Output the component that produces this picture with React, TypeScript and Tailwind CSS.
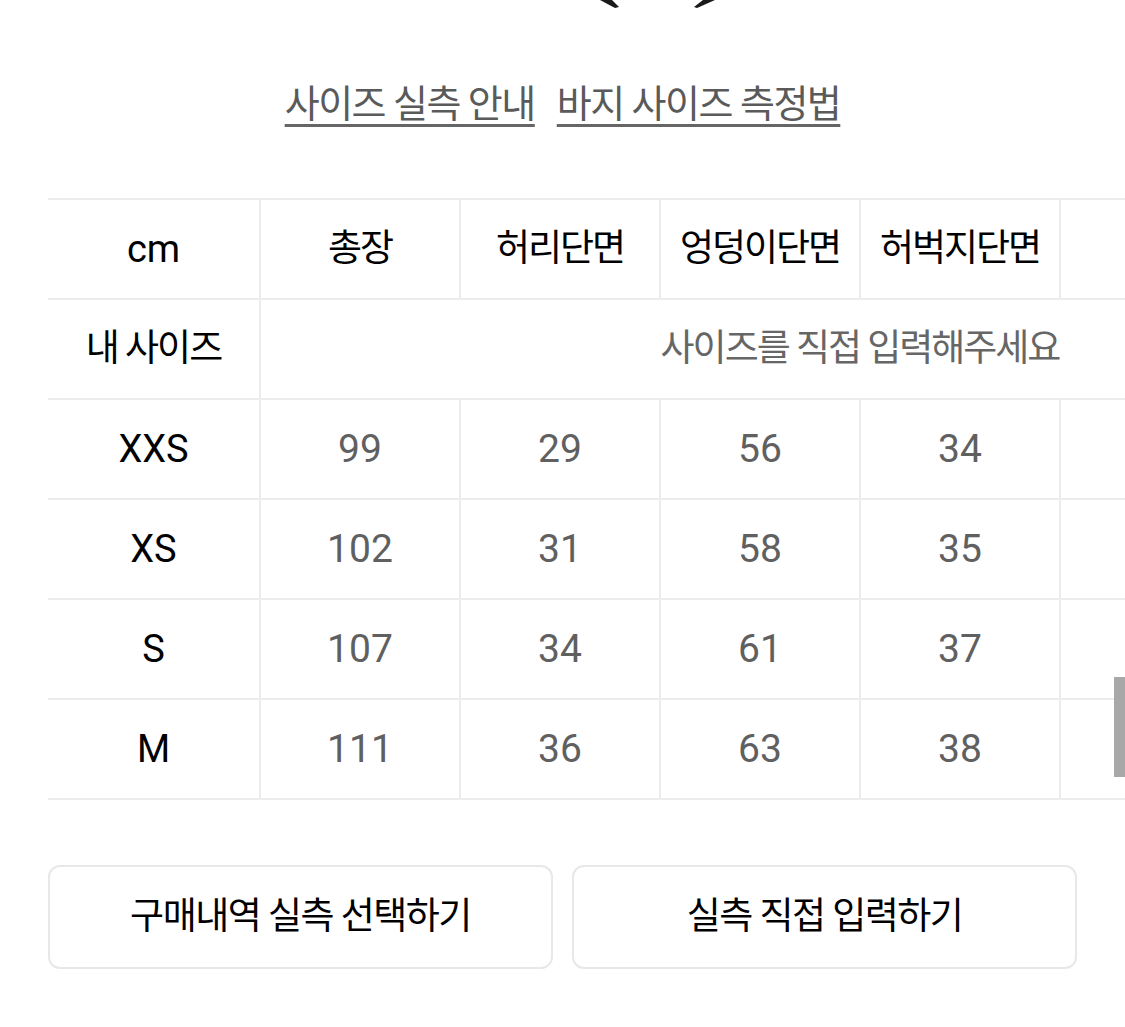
import React from 'react';

const font = { fontFamily: "Roboto, 'Noto Sans CJK KR', sans-serif" };

const columns = ['총장', '허리단면', '엉덩이단면', '허벅지단면', '', ''];

const rows = [
  { size: 'XXS', values: ['99', '29', '56', '34', '', ''] },
  { size: 'XS', values: ['102', '31', '58', '35', '', ''] },
  { size: 'S', values: ['107', '34', '61', '37', '', ''] },
  { size: 'M', values: ['111', '36', '63', '38', '', ''] },
];

const cell = 'h-[100px] border-2 border-[#ececec] text-center align-middle p-0';

export default function App() {
  return (
    <div className="relative w-[1125px] h-[1027px] overflow-hidden bg-white" style={font}>
      {/* bottom edge of the pants illustration */}
      <svg className="block ml-[580px]" width="160" height="10" viewBox="0 0 160 10">
        <polygon points="20,0 32,0 39,7 35,8" fill="#1a1a1a" />
        <polygon points="135,0 123,0 114,7 117,8" fill="#1a1a1a" />
      </svg>

      <div className="mt-[71px] flex justify-center gap-[22px] text-[38px] leading-[46px] tracking-[-1.5px] text-[#5a5a5a]">
        <a className="underline decoration-[3px] underline-offset-[7px] decoration-[#666]">사이즈 실측 안내</a>
        <a className="underline decoration-[3px] underline-offset-[7px] decoration-[#666]">바지 사이즈 측정법</a>
      </div>

      <div className="mt-[71px] pl-[48px] overflow-hidden">
        <table className="table-fixed border-collapse w-[1412px]">
          <colgroup>
            <col className="w-[212px]" />
            {columns.map((c, i) => (
              <col key={i} className="w-[200px]" />
            ))}
          </colgroup>
          <tbody>
            <tr>
              <td className={`${cell} border-l-0 text-[38px] text-black`}>cm</td>
              {columns.map((c, i) => (
                <td key={i} className={`${cell} text-[37px] tracking-[-2px] text-black`}>{c}</td>
              ))}
            </tr>
            <tr>
              <td className={`${cell} border-l-0 text-[37px] tracking-[-2px] text-black`}>내 사이즈</td>
              <td colSpan={6} className={`${cell} text-[37px] tracking-[-2px] text-[#666]`}>사이즈를 직접 입력해주세요</td>
            </tr>
            {rows.map((r) => (
              <tr key={r.size}>
                <td className={`${cell} border-l-0 text-[38px] text-black`}>{r.size}</td>
                {r.values.map((v, i) => (
                  <td key={i} className={`${cell} text-[39px] text-[#606060]`}>{v}</td>
                ))}
              </tr>
            ))}
          </tbody>
        </table>
      </div>

      <div className="mt-[65px] px-[48px] grid grid-cols-2 gap-[19px]">
        <button className="h-[104px] rounded-[12px] border-2 border-[#e8e8e8] bg-white text-[37px] tracking-[-1.5px] text-black">
          구매내역 실측 선택하기
        </button>
        <button className="h-[104px] rounded-[12px] border-2 border-[#e8e8e8] bg-white text-[37px] tracking-[-1.5px] text-black">
          실측 직접 입력하기
        </button>
      </div>

      {/* scroll indicator */}
      <div className="absolute right-0 top-[677px] w-[11px] h-[100px] bg-[#a8a8a8]" />
    </div>
  );
}
